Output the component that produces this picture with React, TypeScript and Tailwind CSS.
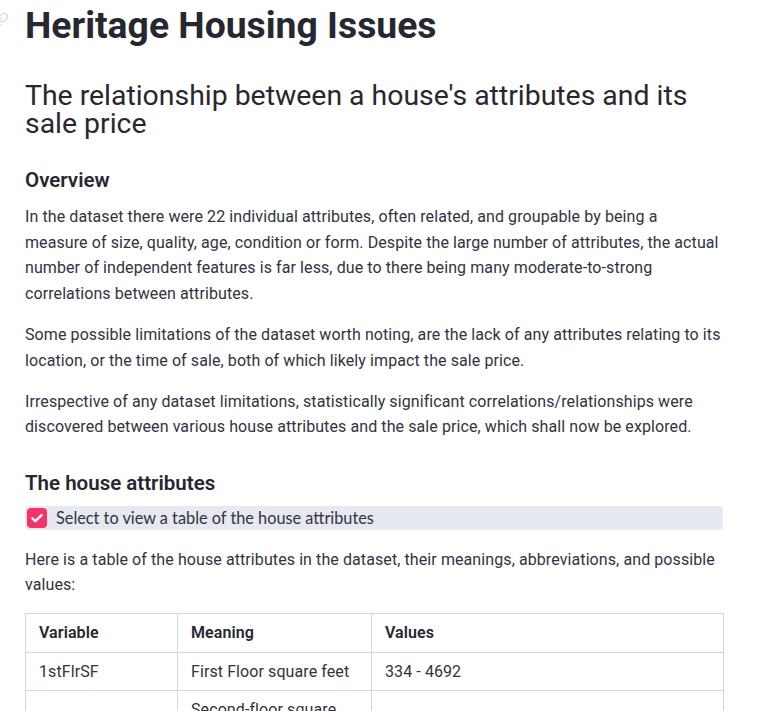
import { Link } from "lucide-react";

const rows = [
  { v: "1stFlrSF", m: "First Floor square feet", r: "334 - 4692" },
  { v: "2ndFlrSF", m: "Second-floor square feet", r: "0 - 2065" },
  { v: "BedroomAbvGr", m: "Bedrooms above grade (does NOT include basement bedrooms)", r: "0 - 8" },
];

export default function App() {
  return (
    <div className="min-h-screen bg-white text-[#31333f]" style={{ fontFamily: "Roboto, 'Liberation Sans', sans-serif" }}>
      <div className="relative w-[698px] ml-[25px] pt-[3px]">
        {/* anchor link icon, mostly off screen */}
        <Link className="absolute left-[-32px] top-[12px] text-[#c4c6cc]" size={16} strokeWidth={1.5} />

        <h1 className="text-[37.3px] leading-[44px] font-bold text-[#262730]">Heritage Housing Issues</h1>

        <h2 className="mt-[35px] text-[28.4px] leading-[28px] font-normal text-[#262730]">
          The relationship between a house's attributes and its sale price
        </h2>

        <h3 className="mt-[28px] text-[20.5px] leading-[28px] font-semibold text-[#262730]">Overview</h3>

        <div className="text-[16px] leading-[25.6px] tracking-[0.09px]">
          <p className="mt-[10px]">
            In the dataset there were 22 individual attributes, often related, and groupable by being a measure of
            size, quality, age, condition or form. Despite the large number of attributes, the actual number of
            independent features is far less, due to there being many moderate-to-strong correlations between
            attributes.
          </p>
          <p className="mt-[16px]">
            Some possible limitations of the dataset worth noting, are the lack of any attributes relating to its
            location, or the time of sale, both of which likely impact the sale price.
          </p>
          <p className="mt-[15px]">
            Irrespective of any dataset limitations, statistically significant correlations/relationships were
            discovered between various house attributes and the sale price, which shall now be explored.
          </p>
        </div>

        <h3 className="mt-[29px] text-[20.5px] leading-[28px] font-semibold text-[#262730]">The house attributes</h3>

        <label className="mt-[9px] flex h-[24px] items-center gap-[9px] rounded-[4px] bg-[#e6e9ef] pl-[2px]">
          <span className="flex h-[20px] w-[20px] items-center justify-center rounded-[4px] bg-[#f63366]">
            <svg width="14" height="14" viewBox="0 0 24 24" fill="none" stroke="white" strokeWidth="4" strokeLinecap="round" strokeLinejoin="round">
              <path d="M4 12.5l5 5L20 7" />
            </svg>
          </span>
          <span className="text-[16.3px]" style={{ fontFamily: "Lato, Roboto, sans-serif" }}>
            Select to view a table of the house attributes
          </span>
        </label>

        <p className="mt-[17px] text-[16px] leading-[25.6px] tracking-[0.09px]">
          Here is a table of the house attributes in the dataset, their meanings, abbreviations, and possible values:
        </p>

        <table className="mt-[15px] w-[698px] table-fixed border-collapse text-[16px] leading-[25.6px] tracking-[0.09px]">
          <colgroup>
            <col className="w-[152px]" />
            <col className="w-[194px]" />
            <col className="w-[352px]" />
          </colgroup>
          <thead>
            <tr>
              <th className="border border-[#d6d6d9] px-[13px] py-[6px] text-left font-semibold text-[#262730]">Variable</th>
              <th className="border border-[#d6d6d9] px-[13px] py-[6px] text-left font-semibold text-[#262730]">Meaning</th>
              <th className="border border-[#d6d6d9] px-[13px] py-[6px] text-left font-semibold text-[#262730]">Values</th>
            </tr>
          </thead>
          <tbody>
            {rows.map((row) => (
              <tr key={row.v}>
                <td className="border border-[#d6d6d9] px-[13px] py-[6px] align-middle">{row.v}</td>
                <td className="border border-[#d6d6d9] px-[13px] py-[6px] align-middle">{row.m}</td>
                <td className="border border-[#d6d6d9] px-[13px] py-[6px] align-middle">{row.r}</td>
              </tr>
            ))}
          </tbody>
        </table>
      </div>
    </div>
  );
}
